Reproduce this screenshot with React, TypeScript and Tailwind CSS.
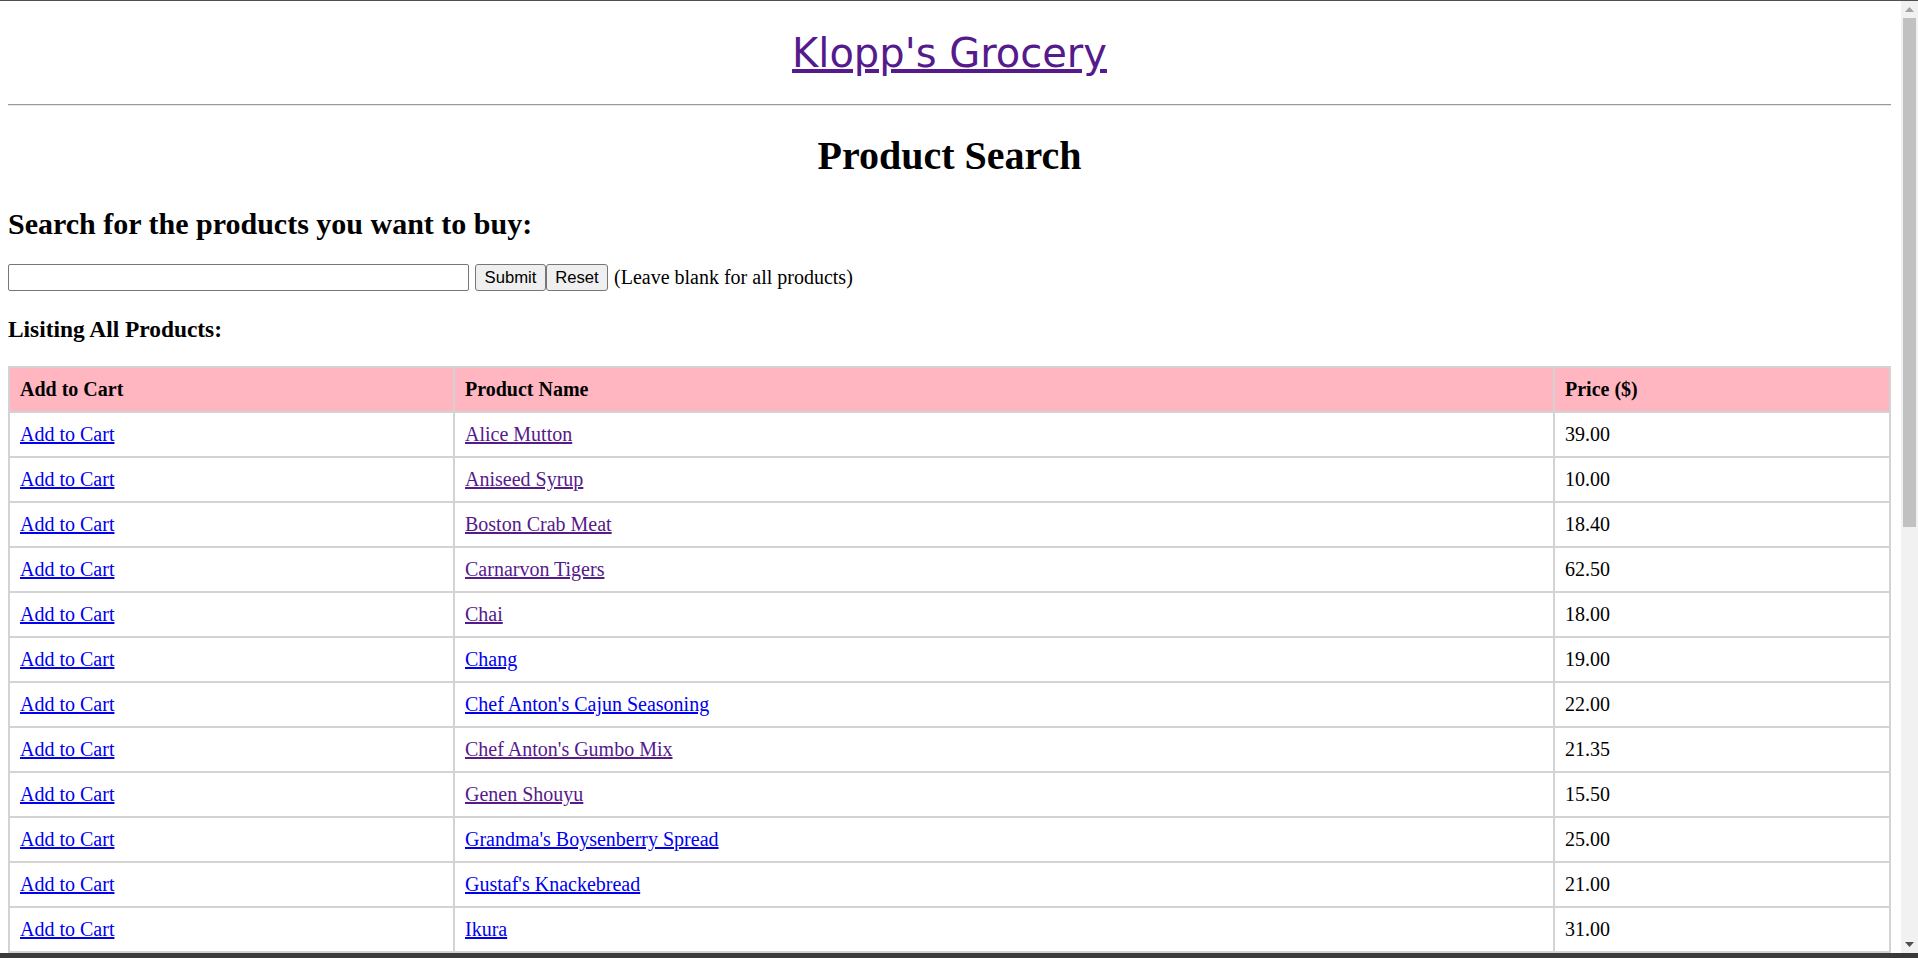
import React from "react";

type Product = { name: string; price: string; visited: boolean };

const products: Product[] = [
  { name: "Alice Mutton", price: "39.00", visited: true },
  { name: "Aniseed Syrup", price: "10.00", visited: true },
  { name: "Boston Crab Meat", price: "18.40", visited: true },
  { name: "Carnarvon Tigers", price: "62.50", visited: true },
  { name: "Chai", price: "18.00", visited: true },
  { name: "Chang", price: "19.00", visited: false },
  { name: "Chef Anton's Cajun Seasoning", price: "22.00", visited: false },
  { name: "Chef Anton's Gumbo Mix", price: "21.35", visited: true },
  { name: "Genen Shouyu", price: "15.50", visited: true },
  { name: "Grandma's Boysenberry Spread", price: "25.00", visited: false },
  { name: "Gustaf's Knackebread", price: "21.00", visited: false },
  { name: "Ikura", price: "31.00", visited: false },
  { name: "Inlagd Sill", price: "19.00", visited: false },
  { name: "Ipoh Coffee", price: "46.00", visited: false },
];

function Row({ p }: { p: Product }) {
  return (
    <div className="grid grid-cols-[445px_1100px_1fr]">
      <div className="border-r-2 border-b-2 border-[#d3d3d3] px-[10px] py-[10px] leading-[23px]">
        <a href="#" className="text-[#0000ee] underline">
          Add to Cart
        </a>
      </div>
      <div className="border-r-2 border-b-2 border-[#d3d3d3] px-[10px] py-[10px] leading-[23px]">
        <a href="#" className={p.visited ? "text-[#551a8b] underline" : "text-[#0000ee] underline"}>
          {p.name}
        </a>
      </div>
      <div className="border-r-2 border-b-2 border-[#d3d3d3] px-[10px] py-[10px] leading-[23px] text-black">
        {p.price}
      </div>
    </div>
  );
}

export default function App() {
  return (
    <div className="w-[1918px] h-[958px] overflow-hidden flex flex-col bg-white">
      <div className="h-px bg-[#4f4f4f] shrink-0" />
      <div className="flex flex-1 min-h-0">
        <main
          className="flex-1 min-w-0 overflow-hidden text-[20px] text-black"
          style={{ fontFamily: '"Liberation Serif", "Times New Roman", serif' }}
        >
          <div className="ml-[8px] mr-[10px]">
            <div className="mt-[29px] text-center leading-[46px]">
              <a
                href="#"
                className="text-[40px] text-[#551a8b] underline"
                style={{ fontFamily: '"DejaVu Sans", "Noto Sans", sans-serif' }}
              >
                Klopp's Grocery
              </a>
            </div>
            <div className="mt-[21px] h-0 border-t border-t-[#9a9a9a] border-b border-b-[#e6e6e6]" />
            <h1 className="mt-[28px] text-center text-[40px] font-bold leading-[44px]">Product Search</h1>
            <h2 className="mt-[29px] text-[30px] font-bold leading-[34px]">
              Search for the products you want to buy:
            </h2>
            <div className="mt-[23px] flex items-center h-[27px]">
              <input
                type="text"
                className="w-[461px] h-[27px] border border-[#767676] rounded-[2px] bg-white px-[2px] outline-none"
              />
              <button
                className="ml-[6px] w-[71px] h-[27px] flex items-center justify-center border border-[#767676] rounded-[3px] bg-[#efefef] text-[16.67px] text-black"
                style={{ fontFamily: '"Liberation Sans", Arial, sans-serif' }}
              >
                Submit
              </button>
              <button
                className="w-[62px] h-[27px] flex items-center justify-center border border-[#767676] rounded-[3px] bg-[#efefef] text-[16.67px] text-black"
                style={{ fontFamily: '"Liberation Sans", Arial, sans-serif' }}
              >
                Reset
              </button>
              <span className="ml-[6px] leading-[23px]">(Leave blank for all products)</span>
            </div>
            <h3 className="mt-[25px] text-[23.4px] font-bold leading-[27px]">Lisiting All Products:</h3>
            <div className="mt-[23px] border-l-2 border-t-2 border-[#d3d3d3]">
              <div className="grid grid-cols-[445px_1100px_1fr] bg-[#ffb6c1] font-bold">
                <div className="border-r-2 border-b-2 border-[#d3d3d3] px-[10px] py-[10px] leading-[23px]">
                  Add to Cart
                </div>
                <div className="border-r-2 border-b-2 border-[#d3d3d3] px-[10px] py-[10px] leading-[23px]">
                  Product Name
                </div>
                <div className="border-r-2 border-b-2 border-[#d3d3d3] px-[10px] py-[10px] leading-[23px]">
                  Price ($)
                </div>
              </div>
              {products.map((p) => (
                <Row key={p.name} p={p} />
              ))}
            </div>
          </div>
        </main>
        <div className="w-[17px] shrink-0 bg-[#f1f1f1] flex flex-col items-center">
          <div className="h-[17px] w-full flex items-center justify-center">
            <svg width="9" height="5" viewBox="0 0 9 5">
              <polygon points="4.5,0 9,5 0,5" fill="#a3a3a3" />
            </svg>
          </div>
          <div className="w-[13px] h-[509px] bg-[#c1c1c1]" />
          <div className="flex-1" />
          <div className="h-[17px] w-full flex items-center justify-center">
            <svg width="9" height="5" viewBox="0 0 9 5">
              <polygon points="0,0 9,0 4.5,5" fill="#505050" />
            </svg>
          </div>
        </div>
      </div>
      <div className="h-[5px] bg-[#3a3a3a] shrink-0" />
    </div>
  );
}
